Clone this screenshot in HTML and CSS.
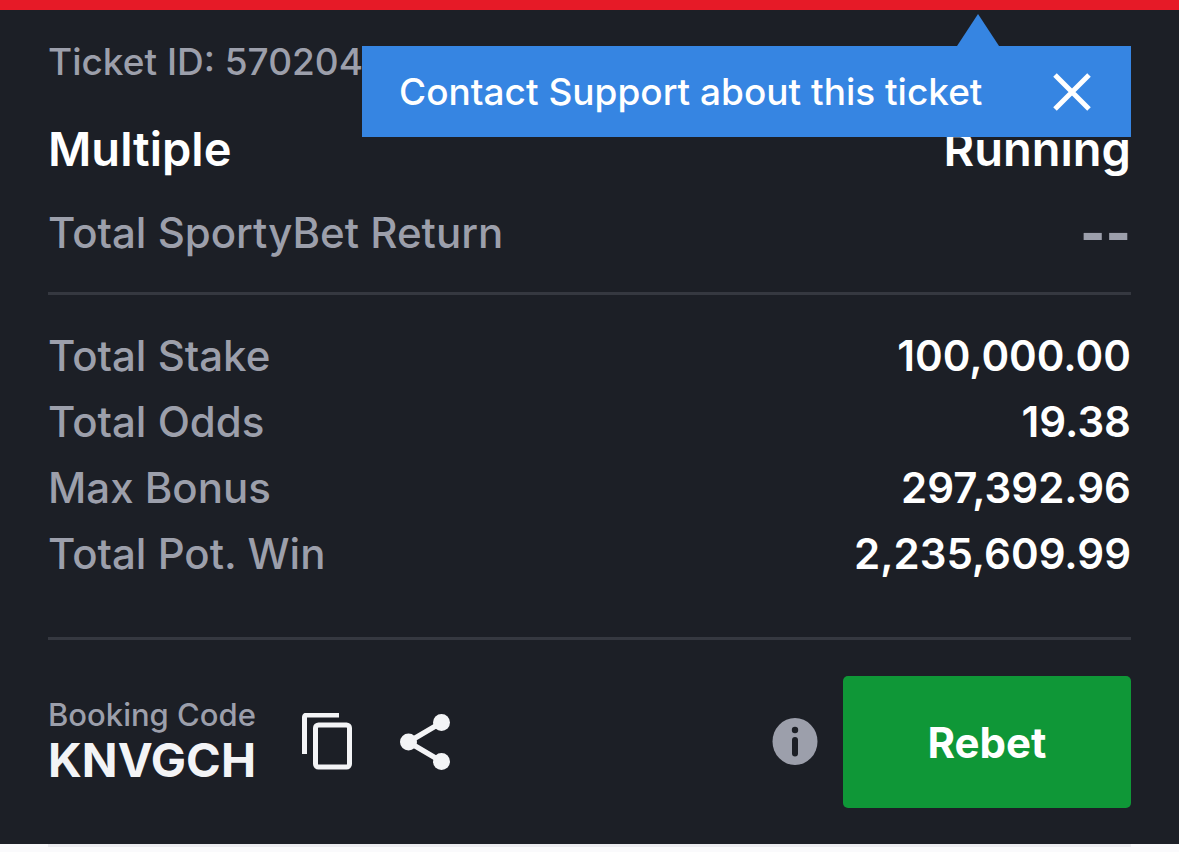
FILE: index.html
```html
<!DOCTYPE html>
<html lang="en">
<head>
<meta charset="utf-8">
<meta name="viewport" content="width=device-width, initial-scale=1">
<title>Ticket details</title>
<link rel="stylesheet" href="styles.css">
</head>
<body>
<main class="ticket">
  <header class="summary">
    <p class="ticket-id">Ticket ID: 570204</p>
    <div class="row row-title">
      <h1 class="title">Multiple</h1>
      <span class="title">Running</span>
    </div>
    <div class="row row-return">
      <span>Total SportyBet Return</span>
      <span class="dashes">--</span>
    </div>
    <div class="tooltip" role="status">
      <span>Contact Support about this ticket</span>
      <button class="icon-button" type="button" aria-label="Close">
        <svg width="38" height="38" viewBox="0 0 38 38"><path d="M2 2 36 36M36 2 2 36" fill="none" stroke="#fff" stroke-width="5"/></svg>
      </button>
    </div>
  </header>
  <dl class="amounts">
    <div class="row"><dt>Total Stake</dt><dd>100,000.00</dd></div>
    <div class="row"><dt>Total Odds</dt><dd>19.38</dd></div>
    <div class="row"><dt>Max Bonus</dt><dd>297,392.96</dd></div>
    <div class="row"><dt>Total Pot. Win</dt><dd>2,235,609.99</dd></div>
  </dl>
  <footer class="actions">
    <div class="booking">
      <span class="booking-label">Booking Code</span>
      <strong class="booking-code">KNVGCH</strong>
    </div>
    <button class="icon-button copy" type="button" aria-label="Copy booking code">
      <svg width="50" height="58" viewBox="0 0 50 58" fill="none" stroke="currentColor" stroke-width="5">
        <path d="M2.500 41V4.500Q2.500 2 5.500 2H37"/>
        <rect x="13.500" y="12" width="34" height="42" rx="3"/>
      </svg>
    </button>
    <button class="icon-button" type="button" aria-label="Share">
      <svg width="50" height="58" viewBox="0 0 50 58">
        <path d="M41.500 9.500 8.500 29 41.500 48.500" fill="none" stroke="currentColor" stroke-width="5.500"/>
        <g fill="currentColor"><circle cx="41.500" cy="9.500" r="8.500"/><circle cx="8.500" cy="29" r="8.500"/><circle cx="41.500" cy="48.500" r="8.500"/></g>
      </svg>
    </button>
    <button class="icon-button info" type="button" aria-label="Information">
      <svg width="46" height="48" viewBox="0 0 46 48">
        <ellipse cx="23" cy="23.500" rx="22.500" ry="23.500" fill="currentColor"/>
        <circle cx="23" cy="12" r="3.200" fill="#1c1f26"/>
        <path d="M23 22V35.500" stroke="#1c1f26" stroke-width="6" stroke-linecap="round"/>
      </svg>
    </button>
    <button class="rebet" type="button">Rebet</button>
  </footer>
</main>
<div class="next-section"></div>
</body>
</html>
```
FILE: styles.css
```css
* {
  box-sizing: border-box;
}

body {
  margin: 0;
  background: #fafafc;
  font-family: Inter, "Liberation Sans", sans-serif;
  font-weight: 500;
}

p, h1, dl, dd {
  margin: 0;
}

button {
  border: 0;
  padding: 0;
  font: inherit;
}

.ticket {
  padding: 0 48px;
  border-top: 10px solid #e61a27;
  background: #1c1f26;
  color: #9c9fab;
  font-size: 42px;
}

.summary {
  position: relative;
  padding: 28px 0 17px;
  border-bottom: 3px solid #353840;
}

.ticket-id {
  margin-bottom: 21px;
  font-size: 37px;
  line-height: 48px;
}

.row {
  display: flex;
  justify-content: space-between;
  line-height: 66px;
}

.row-title,
.row-return {
  line-height: 84px;
}

.title {
  color: #fff;
  font-size: 47px;
  font-weight: 600;
}

.dashes {
  font-size: 54px;
  font-weight: 800;
}

.tooltip {
  position: absolute;
  top: 36px;
  right: 0;
  display: flex;
  align-items: center;
  justify-content: space-between;
  width: 71%;
  height: 91px;
  padding: 0 40px 0 37px;
  background: #3685e2;
  color: #fff;
  font-size: 37px;
}

.tooltip::before {
  content: "";
  position: absolute;
  right: 132px;
  bottom: 100%;
  width: 42px;
  height: 32px;
  background: #3685e2;
  clip-path: polygon(50% 0, 100% 100%, 0 100%);
}

.icon-button {
  display: block;
  background: none;
  color: #f3f4f6;
}

.icon-button svg {
  display: block;
}

.amounts {
  padding: 28px 0 50px;
  border-bottom: 3px solid #353840;
}

dd {
  color: #fff;
  font-weight: 600;
}

.actions {
  display: flex;
  align-items: center;
  padding: 36px 0;
}

.booking {
  display: flex;
  flex-direction: column;
}

.booking-label {
  font-size: 31px;
  line-height: 36px;
}

.booking-code {
  color: #f3f4f6;
  font-size: 47px;
  font-weight: 700;
  line-height: 54px;
}

.copy {
  margin: 0 48px 0 46px;
}

.info {
  margin: 0 25px 0 auto;
  color: #9c9fab;
}

.rebet {
  width: 288px;
  height: 132px;
  border-radius: 5px;
  background: #0f9737;
  color: #fff;
  font-weight: 700;
}

.next-section {
  margin: 0 48px;
  border-top: 3px solid #ececf0;
}
```
